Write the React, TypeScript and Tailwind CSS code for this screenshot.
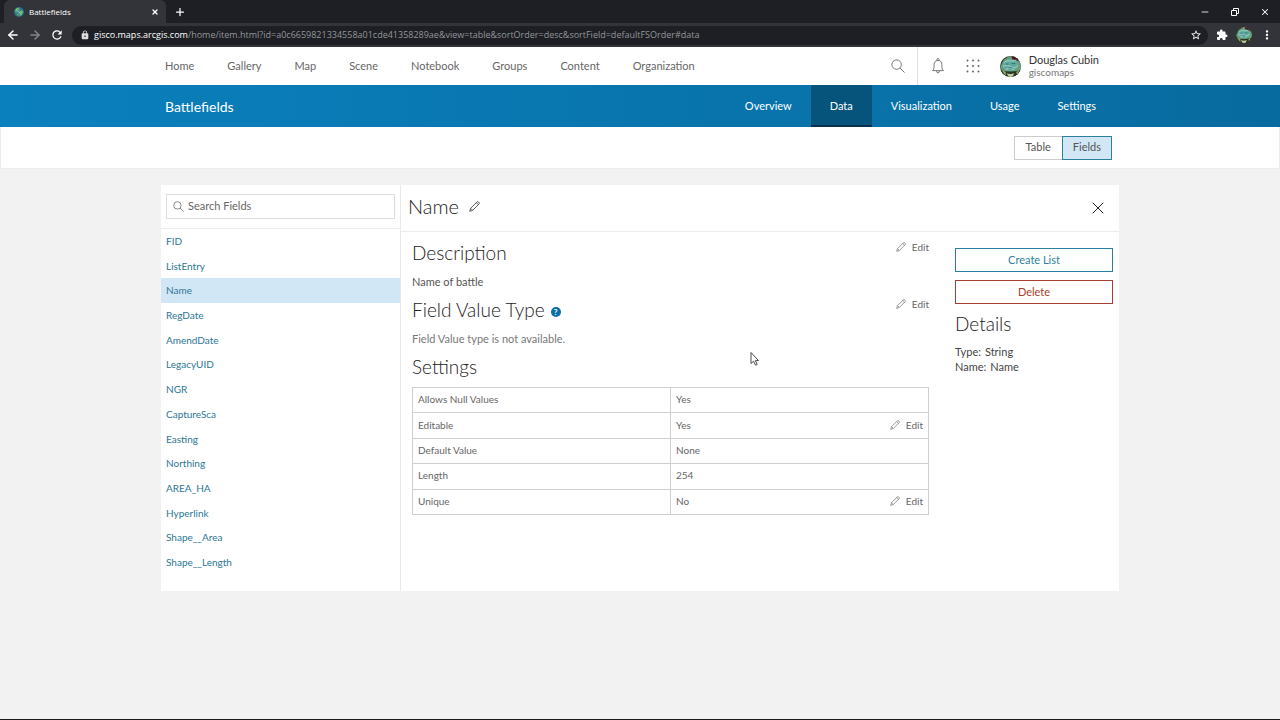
import { useState } from "react"
import type { ReactNode } from "react"
import clsx from "clsx"
import { ArrowLeft, ArrowRight, Minus, Plus, X } from "lucide-react"
import { MdExtension, MdLock, MdMoreVert, MdRefresh, MdStarBorder } from "react-icons/md"

const siteLinks = ["Home", "Gallery", "Map", "Scene", "Notebook", "Groups", "Content", "Organization"]
const itemTabs = ["Overview", "Data", "Visualization", "Usage", "Settings"]
const fields = [
  "FID",
  "ListEntry",
  "Name",
  "RegDate",
  "AmendDate",
  "LegacyUID",
  "NGR",
  "CaptureSca",
  "Easting",
  "Northing",
  "AREA_HA",
  "Hyperlink",
  "Shape__Area",
  "Shape__Length",
]
const settings = [
  { label: "Allows Null Values", value: "Yes" },
  { label: "Editable", value: "Yes", editable: true },
  { label: "Default Value", value: "None" },
  { label: "Length", value: "254" },
  { label: "Unique", value: "No", editable: true },
]

function SearchIcon({ className }: { className: string }) {
  return (
    <svg viewBox="0 0 16 16" fill="none" stroke="currentColor" className={clsx("shrink-0", className)} aria-hidden="true">
      <circle cx="6.4" cy="6.4" r="5.4" />
      <path d="m10.2 10.2 5.3 5.3" />
    </svg>
  )
}

function PencilIcon({ className }: { className: string }) {
  return (
    <svg viewBox="0 0 12 12" fill="none" stroke="currentColor" strokeWidth="0.8" className={className} aria-hidden="true">
      <path d="M.8 11.2 1.7 8.1 8.9.9Q9.6.3 10.4 1.1L10.9 1.6Q11.7 2.4 11.1 3.1L3.9 10.3ZM8 1.8 10.2 4M1.9 8.1 3.9 10.1" />
    </svg>
  )
}

function BellIcon() {
  return (
    <svg viewBox="0 0 16 18" fill="none" stroke="currentColor" className="h-4 w-4" aria-hidden="true">
      <path d="M6.8 3V1.6q0-1 1.2-1t1.2 1V3M1.8 14.2h12.4c-1.4-1.2-1.8-2.3-1.8-4.6V7.4c0-2.8-1.6-4.6-4.4-4.6S3.6 4.6 3.6 7.4v2.2c0 2.3-.4 3.4-1.8 4.6ZM6.4 14.4q0 2.4 1.6 2.4t1.6-2.4" />
    </svg>
  )
}

function GridIcon() {
  return (
    <svg viewBox="0 0 14 14" fill="currentColor" className="size-3.5" aria-hidden="true">
      {[1.5, 7, 12.5].map((y) => [1.5, 7, 12.5].map((x) => <circle key={`${x}-${y}`} cx={x} cy={y} r="1" />))}
    </svg>
  )
}

function Avatar({ className }: { className: string }) {
  return (
    <svg viewBox="0 0 22 22" className={clsx("rounded-full", className)} aria-hidden="true">
      <rect width="22" height="22" fill="#33432f" />
      <path d="M0 12 4 4 10 0h5l7 8v6l-4 2H4Z" fill="#6d9a78" />
      <path d="M12 0h7v5l-6-1Z" fill="#4b1820" />
      <ellipse cx="11" cy="9.5" rx="8.6" ry="6.4" fill="#62aaa0" />
      <path d="M4 7q3-3 7-2t6-1M3 11q4-3 8 0t8-1M6 14q4-2 9 0" fill="none" stroke="#a3d3c0" strokeWidth="1" />
      <path d="M6 8.5h3M12 8h4M9 12.5h4" stroke="#2d7078" strokeWidth="1" />
      <path d="M1 15.5q9 4 20-1l-3 8H4Z" fill="#29331f" />
      <path d="M7 18q4 1.5 8 0l-2 4H9Z" fill="#c0cba1" />
      <path d="m1 14 5 3v4ZM21 13l-4 4 1 3Z" fill="#8ab06c" />
    </svg>
  )
}

function Globe() {
  return (
    <svg viewBox="0 0 10 10" className="size-2.5" aria-hidden="true">
      <circle cx="5" cy="5" r="5" fill="#2a7284" />
      <path d="M1 3q2-3 4-2L4 4 2 5ZM5 5l3-2 1 3-3 3ZM2 6l2 1v2Z" fill="#6cb45f" />
      <path d="M1 5h8M5 1v8M2 2l6 6" stroke="#8fcbd2" strokeWidth="0.5" />
    </svg>
  )
}

function BrowserChrome() {
  return (
    <div className="bg-[#1d1f24] text-white">
      <div className="flex h-[23px] items-center justify-between pl-1">
        <div className="flex h-full items-center">
          <div className="flex h-full w-[162px] items-center gap-[5px] rounded-t-md bg-[#33343a] pr-[7px] pl-2.5">
            <Globe />
            <span className="grow font-[Open_Sans] text-[8px]">Battlefields</span>
            <button aria-label="Close tab">
              <X className="size-2" strokeWidth={4} />
            </button>
          </div>
          <button aria-label="New tab" className="ml-2">
            <Plus className="size-3" strokeWidth={2.5} />
          </button>
        </div>
        <div className="flex gap-5 pr-2.5">
          <button aria-label="Minimize">
            <Minus className="size-2.5" />
          </button>
          <button aria-label="Restore">
            <svg viewBox="0 0 10 10" fill="none" stroke="currentColor" className="size-2.5" aria-hidden="true">
              <path d="M1.5 3.5h5v5h-5ZM3.5 3V1.5h5v5H7" />
            </svg>
          </button>
          <button aria-label="Close window">
            <X className="size-2.5" strokeWidth={2.5} />
          </button>
        </div>
      </div>
      <div className="flex h-6 items-center gap-2 bg-[#33343a] px-1.5">
        <button aria-label="Back">
          <ArrowLeft className="size-3.5" strokeWidth={2.5} />
        </button>
        <button aria-label="Forward" className="text-[#84858a]">
          <ArrowRight className="size-3.5" strokeWidth={2.5} />
        </button>
        <button aria-label="Reload">
          <MdRefresh className="size-3.5" />
        </button>
        <div className="flex h-[19px] grow items-center gap-1 rounded-full bg-[#1d1f24] pr-1.5 pl-2">
          <MdLock className="size-2.5 text-[#dcdcdc]" />
          <p className="grow font-[Open_Sans] text-[9px] text-[#94969a]">
            <span className="text-white">gisco.maps.arcgis.com</span>
            /home/item.html?id=a0c6659821334558a01cde41358289ae&view=table&sortOrder=desc&sortField=defaultFSOrder#data
          </p>
          <button aria-label="Bookmark this page">
            <MdStarBorder className="size-3" />
          </button>
        </div>
        <button aria-label="Extensions">
          <MdExtension className="size-3" />
        </button>
        <Avatar className="size-4" />
        <button aria-label="Browser menu">
          <MdMoreVert className="size-3.5" />
        </button>
      </div>
    </div>
  )
}

function SiteHeader() {
  return (
    <header className="bg-white">
      <div className="mx-auto flex h-[38px] max-w-[958px] items-center pr-5 pl-1 text-[#666]">
        <nav className="flex grow gap-[33px] text-[11px]">
          {siteLinks.map((link) => (
            <a key={link} href="#">
              {link}
            </a>
          ))}
        </nav>
        <button aria-label="Search" className="flex h-full items-center border-r border-[#e0e0e0] pr-3">
          <SearchIcon className="size-3.5" />
        </button>
        <button aria-label="Notifications" className="ml-3">
          <BellIcon />
        </button>
        <button aria-label="Apps" className="mx-5">
          <GridIcon />
        </button>
        <a href="#" className="flex items-center gap-2">
          <Avatar className="size-[21px]" />
          <span>
            <span className="block text-[11px] leading-3 text-[#333]">Douglas Cubin</span>
            <span className="block text-[10px] leading-3 text-[#777]">giscomaps</span>
          </span>
        </a>
      </div>
    </header>
  )
}

function ItemHeader() {
  return (
    <div className="bg-linear-to-r from-[#0a80bd] to-[#086b9f]">
      <div className="mx-auto flex h-[42px] max-w-[958px] items-center justify-between pr-1 pl-1 text-white">
        <h1 className="text-[14px]">Battlefields</h1>
        <nav className="flex h-full text-[11px]">
          {itemTabs.map((tab) => (
            <a
              key={tab}
              href="#"
              className={clsx(
                "flex items-center px-[19px]",
                tab === "Data" && "border-b-2 border-[#06304b] bg-[#06547c] pt-0.5"
              )}
            >
              {tab}
            </a>
          ))}
        </nav>
      </div>
    </div>
  )
}

function EditButton() {
  return (
    <button className="flex items-center gap-1.5 text-[10px] leading-3 text-[#666]">
      <PencilIcon className="size-2.5" />
      Edit
    </button>
  )
}

function SectionTitle({ children }: { children: ReactNode }) {
  return <h3 className="flex items-center gap-1.5 text-[19px] leading-6 font-light text-[#222]">{children}</h3>
}

function FieldList({ selected, onSelect }: { selected: string; onSelect: (field: string) => void }) {
  return (
    <aside className="w-60 shrink-0 border-r border-[#e9e9e9] pb-4">
      <div className="border-b border-[#ececec] px-[5px] py-[9px]">
        <label className="flex h-[25px] items-center gap-1 border border-[#dcdcdc] px-1.5 text-[#555]">
          <SearchIcon className="size-[11px]" />
          <input
            type="search"
            aria-label="Search Fields"
            placeholder="Search Fields"
            className="w-full text-[11px] outline-none placeholder:text-[#666]"
          />
        </label>
      </div>
      <ul className="grid h-[346px] auto-rows-fr">
        {fields.map((field) => (
          <li key={field} className="flex">
            <button
              onClick={() => onSelect(field)}
              className={clsx(
                "grow px-[5px] text-left text-[10px] text-[#2d7696]",
                field === selected && "bg-[#d2e7f5]"
              )}
            >
              {field}
            </button>
          </li>
        ))}
      </ul>
    </aside>
  )
}

export default function App() {
  const [selected, setSelected] = useState("Name")

  return (
    <div className="flex min-h-screen flex-col border-b border-[#1d1a1f] bg-[#f2f2f2] font-[Lato,sans-serif]">
      <BrowserChrome />
      <SiteHeader />
      <ItemHeader />
      <div className="border border-t-0 border-[#ececec] bg-white">
        <div className="mx-auto flex h-[41px] max-w-[958px] items-center justify-end pr-[7px] text-[11px] text-[#555]">
          <button className="h-6 border border-r-0 border-[#ccc] px-[11px]">Table</button>
          <button className="h-6 border border-[#2d7fa0] bg-[#d2e7f5] px-2.5">Fields</button>
        </div>
      </div>

      <main className="mx-auto mt-4 flex w-full max-w-[958px] bg-white">
        <FieldList selected={selected} onSelect={setSelected} />
        <div className="grow">
          <div className="flex h-[47px] items-center justify-between border-b border-[#ececec] pr-[11px] pl-[7px] text-[#222]">
            <div className="flex items-center gap-2.5 pb-1">
              <h2 className="text-[20px] leading-6 font-light">{selected}</h2>
              <button aria-label="Rename field">
                <PencilIcon className="size-[11px]" />
              </button>
            </div>
            <button aria-label="Close">
              <X className="size-5" strokeWidth={1.2} />
            </button>
          </div>
          <div className="flex gap-[26px] pr-1.5 pl-[11px]">
            <div className="grow">
              <section className="flex h-[57px] items-start justify-between pt-[9px]">
                <div>
                  <SectionTitle>Description</SectionTitle>
                  <p className="mt-[9px] text-[11px] leading-4 text-[#555]">Name of battle</p>
                </div>
                <EditButton />
              </section>
              <section className="flex h-[57px] items-start justify-between pt-[9px]">
                <div>
                  <SectionTitle>
                    Field Value Type
                    <button
                      aria-label="Help"
                      className="mt-1 size-2.5 rounded-full bg-[#0a6fa8] text-[8px] leading-[10px] font-bold text-white"
                    >
                      ?
                    </button>
                  </SectionTitle>
                  <p className="mt-[9px] text-[11px] leading-4 text-[#777]">Field Value type is not available.</p>
                </div>
                <EditButton />
              </section>
              <section className="pt-[9px]">
                <SectionTitle>Settings</SectionTitle>
                <table className="mt-2 h-32 w-full table-fixed border-collapse text-[10px] leading-3 text-[#666]">
                  <tbody>
                    {settings.map((row) => (
                      <tr key={row.label}>
                        <th className="border border-[#cfcfcf] px-[5px] pb-0.5 text-left font-normal">{row.label}</th>
                        <td className="border border-[#cfcfcf] px-[5px] pb-0.5">
                          <div className="flex justify-between">
                            {row.value}
                            {row.editable && <EditButton />}
                          </div>
                        </td>
                      </tr>
                    ))}
                  </tbody>
                </table>
              </section>
            </div>
            <div className="w-[158px] shrink-0 pt-4 text-[11px]">
              <div className="grid gap-2">
                <button className="h-6 border border-[#2d7fa0] text-[#2d7fa0]">Create List</button>
                <button className="h-6 border border-[#a8402f] text-[#a8402f]">Delete</button>
              </div>
              <div className="mt-2">
                <SectionTitle>Details</SectionTitle>
              </div>
              <dl className="mt-2 leading-[15px] text-[#444]">
                <div className="flex gap-1">
                  <dt>Type:</dt>
                  <dd>String</dd>
                </div>
                <div className="flex gap-1">
                  <dt>Name:</dt>
                  <dd>{selected}</dd>
                </div>
              </dl>
            </div>
          </div>
        </div>
      </main>

      <svg viewBox="0 0 9 14" className="pointer-events-none absolute top-[352px] left-[750px] h-3.5 w-2.5" aria-hidden="true">
        <path d="M.5.5v11l2.6-2.3 1.9 4 1.7-.8-1.8-3.8H8Z" fill="#fff" stroke="#222" strokeWidth="0.8" />
      </svg>
    </div>
  )
}
